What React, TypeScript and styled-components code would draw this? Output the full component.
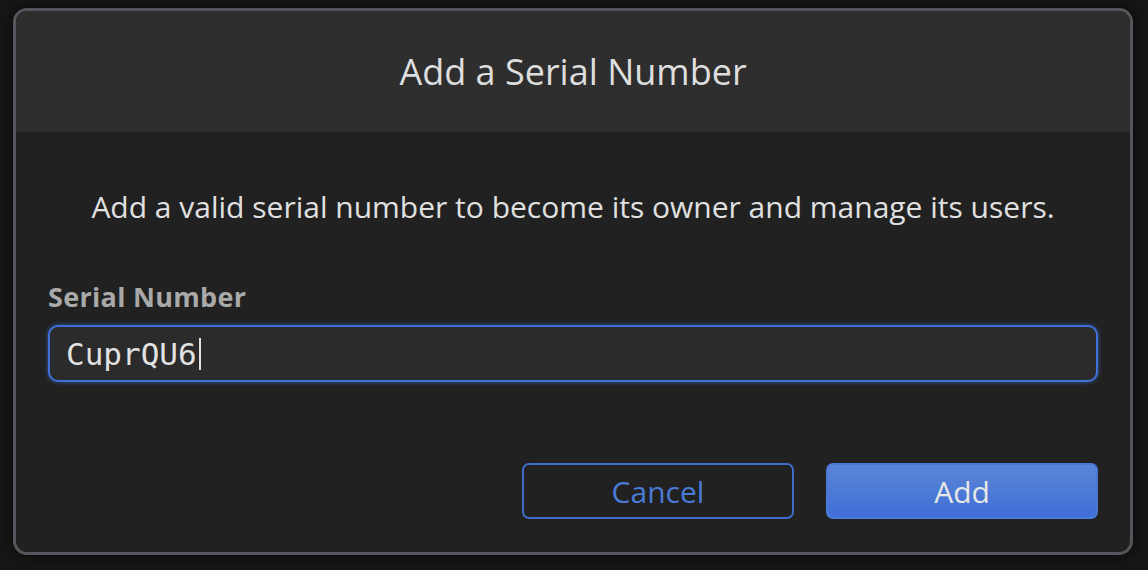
import styled, { createGlobalStyle } from "styled-components";

const GlobalStyle = createGlobalStyle`
  html, body {
    margin: 0;
    padding: 0;
    background: #161616;
  }
  * {
    box-sizing: border-box;
  }
`;

const sans = `"Open Sans", "Liberation Sans", sans-serif`;

export default function App() {
  return (
    <Page>
      <GlobalStyle />
      <Dialog>
        <Header>
          <Title>Add a Serial Number</Title>
        </Header>
        <Body>
          <Description>
            Add a valid serial number to become its owner and manage its users.
          </Description>
          <Label>Serial Number</Label>
          <Field>
            <FieldText>CuprQU6</FieldText>
            <Caret />
          </Field>
          <Actions>
            <Button variant="outline">Cancel</Button>
            <Button variant="primary">Add</Button>
          </Actions>
        </Body>
      </Dialog>
    </Page>
  );
}

const Page = styled.div`
  width: 1148px;
  height: 570px;
  padding: 8px 0 0 13px;
  background: #161616;
`;

const Dialog = styled.div`
  width: 1120px;
  height: 547px;
  display: flex;
  flex-direction: column;
  border: 3px solid #55565b;
  border-radius: 14px;
  overflow: hidden;
  background: #212121;
  box-shadow: 0 0 14px rgba(0, 0, 0, 0.7);
`;

const Header = styled.div`
  height: 121px;
  display: flex;
  align-items: center;
  justify-content: center;
  background: #2e2e2e;
`;

const Title = styled.h1`
  margin: 0;
  font-family: ${sans};
  font-size: 36px;
  font-weight: 500;
  color: #dedede;
`;

const Body = styled.div`
  flex: 1;
  display: flex;
  flex-direction: column;
  padding: 57px 32px 0;
`;

const Description = styled.p`
  margin: 0;
  height: 36px;
  line-height: 36px;
  text-align: center;
  font-family: ${sans};
  font-size: 30px;
  color: #e0e0e0;
`;

const Label = styled.div`
  margin-top: 57px;
  height: 30px;
  line-height: 30px;
  font-family: ${sans};
  font-size: 27px;
  font-weight: 700;
  letter-spacing: 0.3px;
  color: #a9a9a9;
`;

const Field = styled.div`
  margin-top: 13px;
  height: 57px;
  display: flex;
  align-items: center;
  padding: 0 16px;
  background: #2b2b2b;
  border: 2px solid #3f70d8;
  border-radius: 10px;
  box-shadow: 0 0 4px rgba(63, 112, 216, 0.7);
`;

const FieldText = styled.span`
  font-family: "DejaVu Sans Mono", "Liberation Mono", monospace;
  font-size: 31px;
  color: #e2e2e2;
`;

const Caret = styled.span`
  width: 2px;
  height: 32px;
  margin-left: 2px;
  background: #e2e2e2;
`;

const Actions = styled.div`
  margin-top: 81px;
  display: flex;
  justify-content: flex-end;
  gap: 32px;
`;

const Button = styled.button<{ variant: "outline" | "primary" }>`
  width: 272px;
  height: 56px;
  border-radius: 7px;
  font-family: ${sans};
  font-size: 30px;
  cursor: pointer;
  border: 2px solid;
  color: ${(p) => (p.variant === "primary" ? "#e6e6e6" : "#4a7ad6")};
  background: ${(p) =>
    p.variant === "primary"
      ? "linear-gradient(180deg, #5a85d6 0%, #3f6fd6 100%)"
      : "transparent"};
  border-color: ${(p) => (p.variant === "primary" ? "#4a78d6" : "#3e6cc9")};
`;
